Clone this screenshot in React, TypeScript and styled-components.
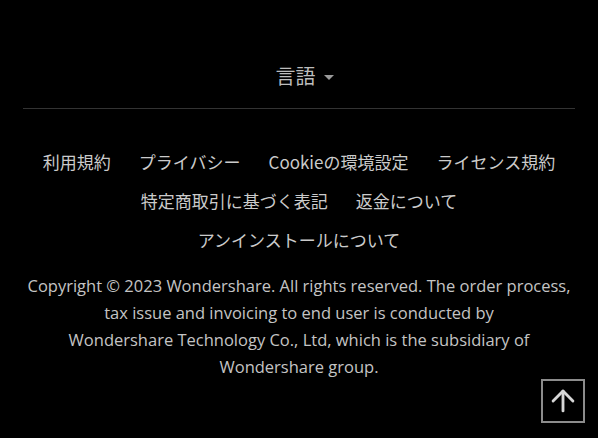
import styled, { createGlobalStyle } from "styled-components";
import { ArrowUp } from "lucide-react";

const GlobalStyle = createGlobalStyle`
  html, body {
    margin: 0;
    padding: 0;
    background: #000;
  }
  body {
    font-family: "Open Sans", "Noto Sans CJK JP", sans-serif;
    color: #c8c8c8;
  }
`;

const links = [
  "利用規約",
  "プライバシー",
  "Cookieの環境設定",
  "ライセンス規約",
  "特定商取引に基づく表記",
  "返金について",
  "アンインストールについて",
];

const App = () => {
  return (
    <>
      <GlobalStyle />
      <Footer>
        <LanguageRow>
          <LanguageToggle>言語</LanguageToggle>
        </LanguageRow>
        <Divider />
        <LinkList>
          {links.map((label) => (
            <FooterLink key={label} href="#">
              {label}
            </FooterLink>
          ))}
        </LinkList>
        <Copyright>
          Copyright © 2023 Wondershare. All rights reserved. The order process,
          tax issue and invoicing to end user is conducted by
          <br />
          Wondershare Technology Co., Ltd, which is the subsidiary of
          Wondershare group.
        </Copyright>
      </Footer>
      <BackToTop aria-label="ページトップへ">
        <ArrowUp size={34} strokeWidth={2} />
      </BackToTop>
    </>
  );
};

const Footer = styled.footer`
  display: flex;
  flex-direction: column;
  align-items: center;
  padding: 60px 0 40px;
  background: #000;
`;

const LanguageRow = styled.div`
  display: flex;
  justify-content: center;
  height: 32px;
  align-items: center;
`;

const LanguageToggle = styled.button`
  display: flex;
  align-items: center;
  gap: 8px;
  margin-left: 11px;
  padding: 0;
  border: none;
  background: none;
  color: #bdbdbd;
  font-family: "Noto Sans CJK JP", sans-serif;
  font-size: 20px;
  line-height: 32px;
  cursor: pointer;

  &::after {
    content: "";
    width: 0;
    height: 0;
    margin-top: 2px;
    border-left: 5.5px solid transparent;
    border-right: 5.5px solid transparent;
    border-top: 5px solid #9a9a9a;
  }
`;

const Divider = styled.hr`
  align-self: stretch;
  margin: 16px 23px 0;
  border: none;
  height: 1px;
  background: #333;
`;

const LinkList = styled.nav`
  display: flex;
  flex-wrap: wrap;
  justify-content: center;
  column-gap: 28px;
  max-width: 530px;
  margin-top: 33px;
`;

const FooterLink = styled.a`
  color: #cbcbcb;
  text-decoration: none;
  font-family: "Noto Sans CJK JP", sans-serif;
  font-size: 17px;
  line-height: 39px;
`;

const Copyright = styled.p`
  max-width: 556px;
  margin: 13px 0 0;
  text-align: center;
  font-size: 16.5px;
  line-height: 27px;
  color: #c4c4c4;
`;

const BackToTop = styled.button`
  position: fixed;
  right: 13px;
  bottom: 15px;
  width: 44px;
  height: 44px;
  display: flex;
  align-items: center;
  justify-content: center;
  padding: 0;
  background: #000;
  border: 2px solid #8c8c8c;
  color: #d6d6d6;
  cursor: pointer;
`;

export default App;
